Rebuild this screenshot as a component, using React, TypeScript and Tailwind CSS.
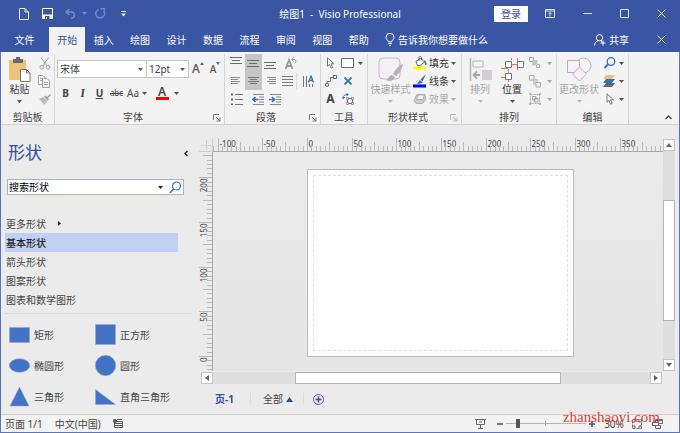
import type { ReactNode } from "react";

const tabs = ["开始", "插入", "绘图", "设计", "数据", "流程", "审阅", "视图", "帮助"];
const stencils = ["更多形状", "基本形状", "箭头形状", "图案形状", "图表和数学图形"];

interface IconProps {
  w?: number;
  h?: number;
  stroke?: string;
  children: ReactNode;
}

function Icon({ w = 14, h = 14, stroke = "#6b6b6b", children }: IconProps) {
  return (
    <svg width={w} height={h} viewBox={`0 0 ${w} ${h}`} fill="none" stroke={stroke} className="shrink-0" aria-hidden="true">
      {children}
    </svg>
  );
}

function Caret({ color = "#555" }: { color?: string }) {
  return (
    <svg width="5" height="3" viewBox="0 0 5 3" className="shrink-0" aria-hidden="true">
      <path d="M0 0h5L2.5 3z" fill={color} />
    </svg>
  );
}

interface ToolProps {
  label: string;
  className?: string;
  children: ReactNode;
}

function Tool({ label, className = "w-[17px]", children }: ToolProps) {
  return (
    <button type="button" aria-label={label} className={`flex h-[18px] shrink-0 items-center justify-center ${className}`}>
      {children}
    </button>
  );
}

function Divider() {
  return <span className="h-4 w-px shrink-0 bg-[#d8d8d8]" />;
}

interface GroupProps {
  title: string;
  className: string;
  launcher?: string;
  children: ReactNode;
}

function Group({ title, className, launcher, children }: GroupProps) {
  return (
    <section className={`flex shrink-0 flex-col border-r border-[#d6d6d6] ${className}`}>
      <div className="h-[55px]">{children}</div>
      <div className={`relative flex h-[15px] items-center justify-center ${launcher ? "pr-[13px]" : ""}`}>
        <h2>{title}</h2>
        {launcher && (
          <button type="button" aria-label={`${title}设置`} className="absolute right-[3px] bottom-[2px]">
            <Icon w={8} h={8} stroke={launcher}>
              <path d="M.5 6V.5H6M3 3l4 4M7 3.5V7H3.5" />
            </Icon>
          </button>
        )}
      </div>
    </section>
  );
}

/* 水平线条组成的段落图标 */
function Lines({ rows, color = "#6b6b6b" }: { rows: number[][]; color?: string }) {
  return (
    <Icon w={13} h={12} stroke={color}>
      {rows.map(([x1, x2, y]) => (
        <path key={y} d={`M${x1} ${y + 0.5}H${x2}`} />
      ))}
    </Icon>
  );
}

function TitleBar() {
  return (
    <div className="grid h-[27px] grid-cols-[1fr_auto_1fr] items-center">
      <div className="flex items-center pl-[19px]">
        <button type="button" aria-label="新建">
          <Icon w={10} h={12} stroke="#e8ecf7">
            <path d="M.5.5H6L9.500 4v7.500h-9zM6 .5V4h3.500" />
          </Icon>
        </button>
        <button type="button" aria-label="保存" className="ml-[13px]">
          <Icon w={11} h={11} stroke="#fff">
            <path d="M.5.5h10v10H.5z" />
            <path d="M1 6.500h9v4H1z" fill="#fff" stroke="none" />
            <path d="M3 8h4.500v3H3z" fill="#3955a3" stroke="none" />
            <path d="M4 9h1v2H4z" fill="#fff" stroke="none" />
          </Icon>
        </button>
        <button type="button" aria-label="撤消" className="ml-3 flex items-center gap-[5px]">
          <Icon w={12} h={11} stroke="#7389c4">
            <path d="M4.500 1L1 4l3.500 3M1 4h6a3.200 3.200 0 010 6.200H6" strokeWidth="1.500" />
          </Icon>
          <Caret color="#7389c4" />
        </button>
        <button type="button" aria-label="恢复" className="ml-2">
          <Icon w={11} h={11} stroke="#7389c4">
            <path d="M3.500 1.500a4.400 4.400 0 105 1.200M5.500 .8h3.800v4" strokeWidth="1.500" />
          </Icon>
        </button>
        <button type="button" aria-label="自定义快速访问工具栏" className="ml-[15px]">
          <Icon w={5} h={6} stroke="#e8ecf7">
            <path d="M0 .5h5" />
            <path d="M0 2.500h5L2.500 5.500z" fill="#e8ecf7" stroke="none" />
          </Icon>
        </button>
      </div>
      <h1 className="whitespace-pre text-white">绘图1  -  Visio Professional</h1>
      <div className="flex items-center justify-end pr-[14px]">
        <button type="button" className="mr-[17px] h-4 w-[34px] bg-white text-[#3955a3]">登录</button>
        <div className="flex items-center gap-[28px]">
          <button type="button" aria-label="功能区显示选项">
            <Icon w={10} h={9} stroke="#dfe5f4">
              <path d="M.5.5h9v8h-9zM0 2h10M5 7.500V3.500M3.500 5L5 3.500 6.500 5" />
            </Icon>
          </button>
          <button type="button" aria-label="最小化">
            <Icon w={9} h={9} stroke="#dfe5f4"><path d="M0 4.500h9" /></Icon>
          </button>
          <button type="button" aria-label="最大化">
            <Icon w={9} h={9} stroke="#dfe5f4"><path d="M.5.5h8v8h-8z" /></Icon>
          </button>
          <button type="button" aria-label="关闭">
            <Icon w={9} h={9} stroke="#dfe5f4"><path d="M.5.5l8 8M8.500.5l-8 8" /></Icon>
          </button>
        </div>
      </div>
    </div>
  );
}

function TabBar() {
  return (
    <nav className="flex h-[25px] items-center text-white">
      <button type="button" className="w-[49px]">文件</button>
      <div className="grid h-full w-[328px] grid-cols-9">
        {tabs.map((tab, i) => (
          <button key={tab} type="button" className={i === 0 ? "bg-[#f3f3f3] text-[#2f4d9e]" : ""}>
            {tab}
          </button>
        ))}
      </div>
      <button type="button" className="ml-2 flex items-center gap-[3px]">
        <Icon w={10} h={13} stroke="#fff">
          <path d="M3.300 8.800C3.300 7.200 1 6.600 1 4.300a4 4 0 018 0c0 2.300-2.300 2.900-2.300 4.500zM3.300 10.500h3.400M4 12.300h2" />
        </Icon>
        告诉我你想要做什么
      </button>
      <button type="button" className="ml-auto flex items-center gap-[3px]">
        <Icon w={12} h={12} stroke="#fff">
          <circle cx="5.500" cy="3.800" r="3.200" />
          <path d="M.5 11.500c.2-2.500 1.500-4 3.500-4.800M7 7l1 .8M9 6.500v5M6.500 9h5" />
        </Icon>
        共享
      </button>
      <button type="button" aria-label="关闭绘图" className="mr-[14px] ml-[28px]">
        <Icon w={9} h={9} stroke="#dfe5f4"><path d="M.5.5l8 8M8.500.5l-8 8" /></Icon>
      </button>
    </nav>
  );
}

function Ribbon() {
  return (
    <div className="flex border-b border-[#d2d2d2] bg-[#f3f3f3] pt-[2px]">
      <Group title="剪贴板" className="w-[54px]">
        <div className="flex">
          <button type="button" className="flex w-[35px] flex-col items-center pt-[3px] pl-[2px]">
            <Icon w={23} h={25} stroke="none">
              <path d="M1 3h17v20H1z" fill="#ecc277" />
              <path d="M5 2h3V0h4v2h3v4H5z" fill="#6a6a6a" />
              <path d="M12.500 12.500h6l3.500 3.500v8.500h-9.500z" fill="#fff" stroke="#777" />
              <path d="M18.500 12.500V16H22" stroke="#777" />
            </Icon>
            <span className="leading-[14px]">粘贴</span>
            <span className="pt-[4px]"><Caret /></span>
          </button>
          <div className="flex flex-col">
            <Tool label="剪切">
              <Icon w={12} h={13} stroke="#a3a3a3">
                <path d="M2 .5l6 8.500M9.500.5L4 9" />
                <circle cx="2.800" cy="10.300" r="1.800" />
                <circle cx="9" cy="10.300" r="1.800" />
              </Icon>
            </Tool>
            <Tool label="复制">
              <Icon w={13} h={13} stroke="#a3a3a3">
                <path d="M4 9.500H.5v-9H5L7.500 3M2 3.500h3M2 5.500h2" />
                <path d="M4.500 3.500H9l2.500 2.500v6.500h-7zM6 7.500h4M6 9.500h4" fill="#f3f3f3" />
              </Icon>
            </Tool>
            <Tool label="格式刷">
              <Icon w={12} h={11} stroke="none">
                <path d="M0 5l4-2 4 4-2.500 4z" fill="#b9b9b9" />
                <path d="M5 2.500l1.500-1 1.500 1.500 3-3 1 1-3 3 1 1.500L8.500 7z" fill="#a2a2a2" />
              </Icon>
            </Tool>
          </div>
        </div>
      </Group>

      <Group title="字体" className="w-[170px]" launcher="#777">
        <div className="flex flex-col gap-[6px] pt-[6px] pl-[2px]">
          <div className="flex h-[18px] items-center">
            <div className="relative h-full w-[90px] border border-[#c6c6c6] bg-white">
              <select aria-label="字体" className="h-full w-full appearance-none bg-transparent px-[2px] leading-4">
                <option>宋体</option>
              </select>
              <span className="pointer-events-none absolute top-[7px] right-[3px] flex"><Caret /></span>
            </div>
            <div className="relative h-full w-[42px] border-y border-r border-[#c6c6c6] bg-white">
              <select aria-label="字号" className="h-full w-full appearance-none bg-transparent px-[2px] text-[10px] leading-4">
                <option>12pt</option>
              </select>
              <span className="pointer-events-none absolute top-[7px] right-[3px] flex"><Caret /></span>
            </div>
            <Tool label="增大字号" className="w-[18px]">
              <span className="flex text-[12px] font-medium text-[#555]">
                A<Icon w={4} h={4} stroke="none"><path d="M0 3h4L2 0z" fill="#2f74b5" /></Icon>
              </span>
            </Tool>
            <Tool label="减小字号" className="w-[16px]">
              <span className="flex text-[10px] font-medium text-[#555]">
                A<Icon w={4} h={4} stroke="none"><path d="M0 0h4L2 3z" fill="#2f74b5" /></Icon>
              </span>
            </Tool>
          </div>
          <div className="flex h-[18px] items-center text-[10px] text-[#444]">
            <Tool label="加粗"><b>B</b></Tool>
            <Tool label="倾斜"><i className="font-serif text-[12px] font-bold">I</i></Tool>
            <Tool label="下划线"><b className="underline">U</b></Tool>
            <Tool label="删除线"><span className="text-[8px] line-through">abc</span></Tool>
            <Tool label="更改大小写" className="w-[24px] gap-[3px]">Aa<Caret /></Tool>
            <span className="mx-[2px]"><Divider /></span>
            <Tool label="字体颜色" className="w-[28px] gap-[5px]">
              <span className="w-[13px] border-b-[3px] border-[#f00] text-[12px] leading-[11px] font-semibold">A</span>
              <Caret />
            </Tool>
          </div>
        </div>
      </Group>

      <Group title="段落" className="w-[96px]" launcher="#777">
        <div className="flex flex-col pl-[3px]">
          <div className="flex items-center">
            <Tool label="顶端对齐"><Lines rows={[[0, 12, 0], [2, 10, 3], [0, 12, 6]]} /></Tool>
            <Tool label="垂直居中" className="w-[17px] bg-[#c5c5c5]"><Lines rows={[[0, 12, 3], [2, 10, 6], [0, 12, 9]]} /></Tool>
            <Tool label="底端对齐"><Lines rows={[[0, 12, 5], [2, 10, 8], [0, 12, 11]]} /></Tool>
            <span className="ml-[3px]"><Divider /></span>
            <Tool label="旋转文字">
              <Icon w={12} h={13} stroke="#9a9a9a">
                <path d="M.5 12L4 3l3.500 9M2 9h4" strokeWidth="1.800" />
                <path d="M7 2.500h2.500a1.800 1.800 0 010 3.500M8.500.5L6.800 2.500l1.700 2" />
              </Icon>
            </Tool>
          </div>
          <div className="flex items-center">
            <Tool label="左对齐"><Lines color="#8a8a8a" rows={[[1, 10, 2], [1, 8, 4], [1, 10, 6], [1, 8, 8]]} /></Tool>
            <Tool label="居中" className="w-[17px] bg-[#c5c5c5]"><Lines color="#777" rows={[[1, 12, 2], [3, 10, 4], [1, 12, 6], [3, 10, 8]]} /></Tool>
            <Tool label="右对齐"><Lines color="#8a8a8a" rows={[[3, 12, 2], [5, 12, 4], [3, 12, 6], [5, 12, 8]]} /></Tool>
            <Tool label="两端对齐"><Lines color="#777" rows={[[1, 12, 1], [1, 12, 4], [1, 12, 7], [1, 12, 10]]} /></Tool>
            <Divider />
            <Tool label="文字方向" className="w-[22px]">
              <Icon w={13} h={13} stroke="#777">
                <path d="M1.500 1v11M4.500 1v11M7.500 9v3M10.500 9v3" />
                <path d="M6.500 7.500l2.500-6.500 2.500 6.500M7.500 5.500h3" stroke="#2f74b5" strokeWidth="1.300" />
              </Icon>
            </Tool>
          </div>
          <div className="flex items-center">
            <Tool label="项目符号">
              <Icon w={12} h={12} stroke="#777">
                <path d="M4 1.500h8M4 6.500h8M4 11.500h8" />
                <path d="M0 1.500h2M0 6.500h2M0 11.500h2" stroke="#2f74b5" strokeWidth="2" />
              </Icon>
            </Tool>
            <span className="mx-[2px]"><Divider /></span>
            <Tool label="减少缩进">
              <Icon w={12} h={11} stroke="#888">
                <path d="M1 .5h11M7 3h5M7 5.500h5M7 8h5M1 10.500h11" />
                <path d="M6.500 5.500H1M3.500 3L1 5.500 3.500 8" stroke="#2f74b5" strokeWidth="1.700" />
              </Icon>
            </Tool>
            <Tool label="增加缩进">
              <Icon w={12} h={11} stroke="#888">
                <path d="M1 .5h11M7 3h5M7 5.500h5M7 8h5M1 10.500h11" />
                <path d="M0 5.500h5.500M3 3l2.500 2.500L3 8" stroke="#2f74b5" strokeWidth="1.700" />
              </Icon>
            </Tool>
          </div>
        </div>
      </Group>

      <Group title="工具" className="w-[47px]">
        <div className="flex flex-col pl-[1px]">
          <div className="flex">
            <Tool label="指针工具">
              <Icon w={8} h={12} stroke="#777">
                <path d="M.5.8v8.400l2-1.800 1.600 3.800 1.500-.7L4 6.800h3z" fill="#fff" />
              </Icon>
            </Tool>
            <Tool label="矩形" className="w-[25px] gap-[4px]">
              <Icon w={13} h={10} stroke="#6b6b6b"><path d="M.5.5h12v9H.5z" fill="#fff" /></Icon>
              <Caret />
            </Tool>
          </div>
          <div className="flex">
            <Tool label="连接线">
              <Icon w={12} h={12} stroke="#2f74b5">
                <path d="M8.500.5h3v3h-3z" />
                <path d="M8 2.500H5.500v4H2V8" stroke="#777" />
                <circle cx="2" cy="9.800" r="1.700" />
              </Icon>
            </Tool>
            <Tool label="连接点">
              <Icon w={8} h={8} stroke="#2f74b5"><path d="M.5.5l7 7M7.500.5l-7 7" strokeWidth="1.800" /></Icon>
            </Tool>
          </div>
          <div className="flex">
            <Tool label="文本"><b className="text-[12px] text-[#444]">A</b></Tool>
            <Tool label="文本块">
              <Icon w={12} h={12} stroke="#666">
                <path d="M5.500 5.500h5v5h-5z" />
                <path d="M4.500 4.500h2v2h-2zM9.500 4.500h2v2h-2zM4.500 9.500h2v2h-2zM9.500 9.500h2v2h-2z" fill="#f3f3f3" strokeWidth=".6" />
                <path d="M1 5.500C1 2.500 3 1.500 6 1.500M4.500 0L6 1.500 4.500 3.200M0 4l1.200 1.800L3 4" stroke="#2f74b5" />
              </Icon>
            </Tool>
          </div>
        </div>
      </Group>

      <Group title="形状样式" className="w-[94px]" launcher="#b5b5b5">
        <div className="flex">
          <button type="button" className="flex w-[45px] flex-col items-center pt-[3px] text-[#a6a6a6]">
            <Icon w={26} h={25} stroke="#c3b9c3">
              <rect x="1" y="1" width="21" height="21" rx="4" fill="#f5f0f5" />
              <path d="M25 7c-5 2-8 6-10 10l3 2c4-4 6-7 7-12zM14 18c-3 0-3 4-6 5 3 2 8 1 9-3z" fill="#b3b3b3" stroke="none" />
            </Icon>
            <span className="leading-[14px]">快速样式</span>
            <span className="pt-[4px]"><Caret color="#b8b8b8" /></span>
          </button>
          <div className="flex flex-col text-[#333]">
            <Tool label="填充" className="gap-[2px]">
              <Icon w={14} h={14} stroke="#666">
                <path d="M3 5.500L7.500 2l4 4-4.500 3.500H4.500zM6 5V1.500a1.300 1.300 0 012.500 0V4" fill="#fff" />
                <path d="M11 5c2 1 2 2 1.500 4" stroke="#2f74b5" strokeWidth="1.600" />
                <path d="M0 10.500h13v3H0z" fill="#ff0" stroke="none" />
              </Icon>
              填充<Caret />
            </Tool>
            <Tool label="线条" className="gap-[2px]">
              <Icon w={14} h={14} stroke="none">
                <path d="M13 0L7.500 5.500l2 2z" fill="#666" />
                <path d="M7 6l2.500 2.200C8 10 6 10 3.500 9.500 5.500 9 5.500 7 7 6z" fill="#2f74b5" />
                <path d="M0 10.500h13v3H0z" fill="#00f" />
              </Icon>
              线条<Caret />
            </Tool>
            <Tool label="效果" className="gap-[2px] text-[#a6a6a6]">
              <Icon w={14} h={14} stroke="#b0b0b0">
                <path d="M1 8.500L4 2.500h8l.8 5-3.300 4H3z" fill="#c9c9c9" />
                <path d="M3.500 7.500l1.800-4.500h6.200l-1.800 4.500z" fill="#f6f2f6" />
              </Icon>
              效果<Caret color="#b0b0b0" />
            </Tool>
          </div>
        </div>
      </Group>

      <Group title="排列" className="w-[95px]">
        <div className="flex">
          <button type="button" className="flex w-[36px] flex-col items-center pt-[3px] text-[#a6a6a6]">
            <Icon w={23} h={25} stroke="#b5b5b5">
              <path d="M1.500 1v23" strokeWidth="1.500" />
              <path d="M4 4h10v6H4z" fill="#f8f2f8" />
              <path d="M13 13h10v10H13z" fill="#d3ccd3" stroke="none" />
              <path d="M11 18H5M8 14.500L4.500 18 8 21.500" stroke="#a6a6a6" strokeWidth="1.800" />
            </Icon>
            <span className="leading-[14px]">排列</span>
            <span className="pt-[4px]"><Caret color="#b8b8b8" /></span>
          </button>
          <button type="button" className="flex w-[28px] flex-col items-center pt-[3px] text-[#333]">
            <Icon w={23} h={25} stroke="#777">
              <path d="M10.500 1v2M16.500 1v12M11 7.500h5M7.500 12v13M0 11.500h7M0 20.500h4" stroke="#e2725b" />
              <path d="M4.500 4.500h6v6h-6zM16.500 4.500h6v6h-6zM4.500 16.500h6v6h-6z" fill="#fff" />
            </Icon>
            <span className="leading-[14px]">位置</span>
            <span className="pt-[4px]"><Caret /></span>
          </button>
          <div className="flex flex-col pl-[1px]">
            <Tool label="置于顶层" className="w-[27px] gap-[6px]">
              <Icon w={12} h={12} stroke="#a8a8a8">
                <path d="M.5 4.500v-4h4v4zM7.500 7.500h3v3h-3z" fill="#f6f2f6" />
                <path d="M3 3h5.500v5.500H3z" fill="#c8c0c8" stroke="none" />
              </Icon>
              <Caret color="#a8a8a8" />
            </Tool>
            <Tool label="置于底层" className="w-[27px] gap-[6px]">
              <Icon w={12} h={13} stroke="#a8a8a8">
                <path d="M4 4h5v6H4z" fill="#d3ccd3" stroke="none" />
                <path d="M.5.5H5v4.500H.5zM7 7.500h4.500V12H7z" fill="#f6f2f6" />
              </Icon>
              <Caret color="#a8a8a8" />
            </Tool>
            <Tool label="组合" className="w-[27px] gap-[6px]">
              <Icon w={12} h={12} stroke="#a8a8a8">
                <path d="M1.500 1.500h9v9h-9z" strokeDasharray="2 1" />
                <path d="M3.500 3.500H7V7H3.500zM5.500 5.500H9V9H5.500zM.5.5h1v1h-1zM10.500.5h1v1h-1zM.5 10.500h1v1h-1zM10.500 10.500h1v1h-1z" />
              </Icon>
              <Caret color="#a8a8a8" />
            </Tool>
          </div>
        </div>
      </Group>

      <Group title="编辑" className="w-[72px]">
        <div className="flex">
          <button type="button" className="flex w-[44px] flex-col items-center pt-[3px] text-[#a6a6a6]">
            <Icon w={25} h={25} stroke="#b8b0b8">
              <circle cx="16.500" cy="8.500" r="7.500" fill="#f8f2f8" />
              <path d="M.5 3.500h12v12H.5z" fill="#f8f2f8" />
              <path d="M12.500 10l7 7-7 7-7-7z" fill="#f8f2f8" />
            </Icon>
            <span className="leading-[14px]">更改形状</span>
            <span className="pt-[4px]"><Caret color="#b8b8b8" /></span>
          </button>
          <div className="flex flex-col">
            <Tool label="查找" className="w-[25px] gap-[3px]">
              <Icon w={13} h={12} stroke="#2f74b5">
                <circle cx="8" cy="4.500" r="3.800" strokeWidth="1.300" />
                <path d="M5.200 7.300L1.500 11" strokeWidth="2" />
              </Icon>
              <Caret />
            </Tool>
            <Tool label="图层" className="w-[25px] gap-[3px]">
              <Icon w={13} h={12} stroke="none">
                <path d="M3 8h9l-3 4H0z" fill="#666" />
                <path d="M3 4h9L9 8H0z" fill="#2f74b5" />
                <path d="M3 0h9L9 4H0z" fill="#ecc277" />
              </Icon>
              <Caret />
            </Tool>
            <Tool label="选择" className="w-[25px] gap-[3px]">
              <Icon w={13} h={12} stroke="#777">
                <path d="M4 .8v8.400l2-1.800 1.600 3.800 1.500-.7-1.600-3.700h3z" fill="#fff" />
              </Icon>
              <Caret />
            </Tool>
          </div>
        </div>
      </Group>

      <button type="button" aria-label="折叠功能区" className="mt-auto mr-[7px] mb-1 ml-auto">
        <Icon w={7} h={5} stroke="#444"><path d="M.5 4l3-3 3 3" strokeWidth="1.300" /></Icon>
      </button>
    </div>
  );
}

const shapes: { name: string; art: ReactNode }[] = [
  { name: "矩形", art: <path d="M.5 3.500h20v15H.5z" /> },
  { name: "正方形", art: <path d="M.5.5h20v20H.5z" /> },
  { name: "椭圆形", art: <ellipse cx="10.500" cy="10.500" rx="10.300" ry="6.800" /> },
  { name: "圆形", art: <circle cx="10.500" cy="10.500" r="10.200" /> },
  { name: "三角形", art: <path d="M10.500 1L20 20H1z" /> },
  { name: "直角三角形", art: <path d="M.5 3.500V18.500h20z" /> },
];

function ShapesPanel() {
  return (
    <aside className="flex w-[198px] shrink-0 flex-col">
      <div className="mt-4 flex h-6 items-center justify-between pr-[11px] pl-[7px]">
        <h2 className="text-[17px] text-[#2f4d9e]">形状</h2>
        <button type="button" aria-label="最小化形状窗口">
          <Icon w={4} h={7} stroke="#222"><path d="M3.500 1L1 3.500 3.500 6" strokeWidth="1.300" /></Icon>
        </button>
      </div>
      <div className="mt-[14px] ml-[6px] flex h-4 w-[177px] items-center border border-[#aab4c0] bg-white pr-[1px]">
        <input aria-label="搜索形状" defaultValue="搜索形状" className="min-w-0 flex-1 bg-transparent pl-[1px] text-black outline-none" />
        <Caret color="#222" />
        <button type="button" aria-label="搜索" className="ml-[6px]">
          <Icon w={13} h={13} stroke="#2f74b5">
            <circle cx="7.500" cy="5" r="4" strokeWidth="1.200" />
            <path d="M4.500 8L1 12" strokeWidth="1.600" />
          </Icon>
        </button>
      </div>
      <ul className="mt-[19px] ml-1 w-[173px]">
        {stencils.map((name, i) => (
          <li key={name}>
            <button
              type="button"
              className={`flex h-[19px] w-full items-center gap-[12px] pl-[1px] ${i === 1 ? "bg-[#c3cff2] font-medium text-[#222]" : ""}`}
            >
              {name}
              {i === 0 && (
                <Icon w={3} h={5} stroke="none"><path d="M0 0v5l3-2.500z" fill="#222" /></Icon>
              )}
            </button>
          </li>
        ))}
      </ul>
      <div className="mt-1 mr-[7px] ml-1 h-px bg-[#dadada]" />
      <ul className="mt-[5px] grid grid-cols-[86px_1fr] pl-2">
        {shapes.map(({ name, art }) => (
          <li key={name}>
            <button type="button" className="flex h-[31px] items-center gap-[4px]">
              <svg width="21" height="21" viewBox="0 0 21 21" fill="#4472c4" stroke="#8fa6d4" strokeWidth=".5" aria-hidden="true">
                {art}
              </svg>
              {name}
            </button>
          </li>
        ))}
      </ul>
    </aside>
  );
}

/* 每毫米对应的像素数 */
const SCALE = 0.893;

function tickLength(mm: number) {
  if (mm % 50 === 0) return 13;
  return mm % 25 === 0 ? 9 : 5;
}

function HorizontalRuler() {
  const marks = Array.from({ length: 101 }, (_, i) => i * 5 - 105);
  return (
    <svg height="14" className="min-w-0 flex-1" aria-hidden="true">
      {marks.map((mm) => {
        const x = Math.round(94 + mm * SCALE) + 0.5;
        return (
          <g key={mm}>
            <path d={`M${x} ${13 - tickLength(mm)}V13`} stroke="#b9b9b9" />
            {mm % 50 === 0 && <text x={x + 1} y="9" fontSize="8" fill="#444">{mm}</text>}
          </g>
        );
      })}
      <path d="M0 13.500h4000" stroke="#a9a9a9" />
    </svg>
  );
}

function VerticalRuler() {
  const marks = Array.from({ length: 49 }, (_, i) => 225 - i * 5);
  return (
    <svg width="14" className="shrink-0" aria-hidden="true">
      {marks.map((mm) => {
        const y = Math.round(204 - mm * SCALE) + 0.5;
        return (
          <g key={mm}>
            <path d={`M${13 - tickLength(mm)} ${y}H13`} stroke="#b9b9b9" />
            {mm % 50 === 0 && (
              <text transform={`translate(8 ${y + 1}) rotate(-90)`} textAnchor="end" fontSize="8" fill="#444">
                {mm}
              </text>
            )}
          </g>
        );
      })}
      <path d="M13.500 0v2000" stroke="#a9a9a9" />
    </svg>
  );
}

function ScrollButton({ label, d }: { label: string; d: string }) {
  return (
    <button type="button" aria-label={label} className="flex size-3 shrink-0 items-center justify-center border border-[#c4c4c4] bg-white">
      <svg width="6" height="6" viewBox="0 0 6 6" aria-hidden="true"><path d={d} fill="#666" /></svg>
    </button>
  );
}

function DrawingPane() {
  return (
    <main className="flex min-w-0 flex-1 flex-col pt-[13px]">
      <div className="flex flex-1 pr-[4px]">
        <div className="flex min-w-0 flex-1 flex-col">
          <div className="flex">
            <Icon w={14} h={14} stroke="#cfcfcf"><path d="M7.500 2v10M2 7.500h10M0 13.500h14M13.500 0v14" /></Icon>
            <HorizontalRuler />
          </div>
          <div className="flex flex-1">
            <VerticalRuler />
            <div className="relative flex-1 overflow-hidden bg-linear-to-b from-[#ebebeb] to-[#e5e5e5]">
              <div className="absolute top-[17px] left-[94px] h-[188px] w-[267px] border border-[#b9bbc2] bg-white p-[5px]">
                <div className="h-full w-full border border-dashed border-[#dedede]" />
              </div>
            </div>
          </div>
        </div>
        <div className="mt-[1px] flex w-3 flex-col bg-[#dedede]">
          <ScrollButton label="向上滚动" d="M0 5h6L3 1z" />
          <div className="flex-[49]" />
          <div className="flex-[120] border border-[#b5b5b5] bg-white" />
          <div className="flex-[38]" />
          <ScrollButton label="向下滚动" d="M0 1h6L3 5z" />
        </div>
      </div>
      <div className="mt-[1px] mr-[17px] ml-[2px] flex h-3 bg-[#dedede]">
        <ScrollButton label="向左滚动" d="M5 0v6L1 3z" />
        <div className="flex-[82]" />
        <div className="flex-[265] border border-[#b5b5b5] bg-white" />
        <div className="flex-[89]" />
        <ScrollButton label="向右滚动" d="M1 0v6l4-3z" />
      </div>
      <div className="flex h-[30px] items-center pl-[16px]">
        <button type="button" className="font-bold text-[#2f4d9e]">页-1</button>
        <span className="mr-3 ml-[16px] h-3 w-px bg-[#dcdcdc]" />
        <button type="button" className="flex items-center gap-[3px]">
          全部
          <Icon w={7} h={5} stroke="none"><path d="M0 5h7L3.500 0z" fill="#2f4d9e" /></Icon>
        </button>
        <span className="mr-[9px] ml-[10px] h-3 w-px bg-[#dcdcdc]" />
        <button type="button" aria-label="插入页">
          <Icon w={11} h={11} stroke="#2f4d9e">
            <circle cx="5.500" cy="5.500" r="5" strokeWidth=".8" />
            <path d="M5.500 2.500v6M2.500 5.500h6" strokeWidth="1.500" />
          </Icon>
        </button>
      </div>
    </main>
  );
}

function StatusBar() {
  return (
    <footer className="relative flex h-[18px] items-center border-t border-[#cfcfcf] bg-[#f3f3f3] pr-4 pl-1">
      <span>页面 1/1</span>
      <span className="ml-[12px]">中文(中国)</span>
      <button type="button" aria-label="录制宏" className="ml-[12px]">
        <Icon w={10} h={9} stroke="#555">
          <path d="M1.500 2.500h8v6h-8zM2 4.500h7M2 6.500h7M4 .5h5" />
          <circle cx="2" cy="2" r="2" fill="#555" stroke="none" />
        </Icon>
      </button>
      <div className="ml-auto flex items-center">
        <button type="button" aria-label="演示模式">
          <Icon w={11} h={10} stroke="#666"><path d="M0 .5h11M1.500.5v5h8v-5M5.500 6v3.500M3 9.500h5M4 3h3" /></Icon>
        </button>
        <button type="button" aria-label="缩小" className="ml-[11px]">
          <Icon w={6} h={6} stroke="#555"><path d="M0 3h6" strokeWidth="1.500" /></Icon>
        </button>
        <div className="relative mx-[3px] flex w-20 items-center">
          <span className="absolute left-[39px] h-[5px] w-px bg-[#a5a5a5]" />
          <input
            type="range"
            aria-label="缩放"
            min={0}
            max={240}
            defaultValue={30}
            className="relative h-[10px] w-full appearance-none bg-transparent [&::-webkit-slider-runnable-track]:h-px [&::-webkit-slider-runnable-track]:bg-[#b5b5b5] [&::-webkit-slider-thumb]:mt-[-4px] [&::-webkit-slider-thumb]:h-[9px] [&::-webkit-slider-thumb]:w-[4px] [&::-webkit-slider-thumb]:appearance-none [&::-webkit-slider-thumb]:bg-[#555]"
          />
        </div>
        <button type="button" aria-label="放大">
          <Icon w={6} h={6} stroke="#555"><path d="M0 3h6M3 0v6" strokeWidth="1.500" /></Icon>
        </button>
        <button type="button" className="ml-2 w-[22px]">30%</button>
        <button type="button" aria-label="适应窗口大小" className="ml-[7px]">
          <Icon w={10} h={10} stroke="#666">
            <path d="M.5.5h9v9h-9z" strokeDasharray="3 1" />
            <path d="M2 4V2h2M6 2h2v2M8 6v2H6M4 8H2V6" />
          </Icon>
        </button>
        <button type="button" aria-label="切换窗口" className="ml-[10px]">
          <Icon w={11} h={10} stroke="#666">
            <path d="M3.500.5h7v4h-7zM3 1.500h8" />
            <path d="M.5 3.500h6v3h-6zM3.500 6.500h5v3h-5z" fill="#f3f3f3" />
          </Icon>
        </button>
      </div>
      <span className="pointer-events-none absolute right-[19px] bottom-[7px] font-['Liberation_Serif',serif] text-[15px] leading-4 text-[#e23b34]">
        zhanshaoyi.com
      </span>
    </footer>
  );
}

export default function App() {
  return (
    <div className="flex min-h-screen flex-col bg-[#ebebeb] font-['Noto_Sans','Noto_Sans_CJK_SC',sans-serif] text-[10px] leading-[14px] whitespace-nowrap text-[#444]">
      <header className="bg-[#3955a3]">
        <TitleBar />
        <TabBar />
      </header>
      <div className="flex flex-1 flex-col border-x border-b border-[#5b74b8]">
        <Ribbon />
        <div className="flex flex-1">
          <ShapesPanel />
          <DrawingPane />
        </div>
        <StatusBar />
      </div>
    </div>
  );
}
